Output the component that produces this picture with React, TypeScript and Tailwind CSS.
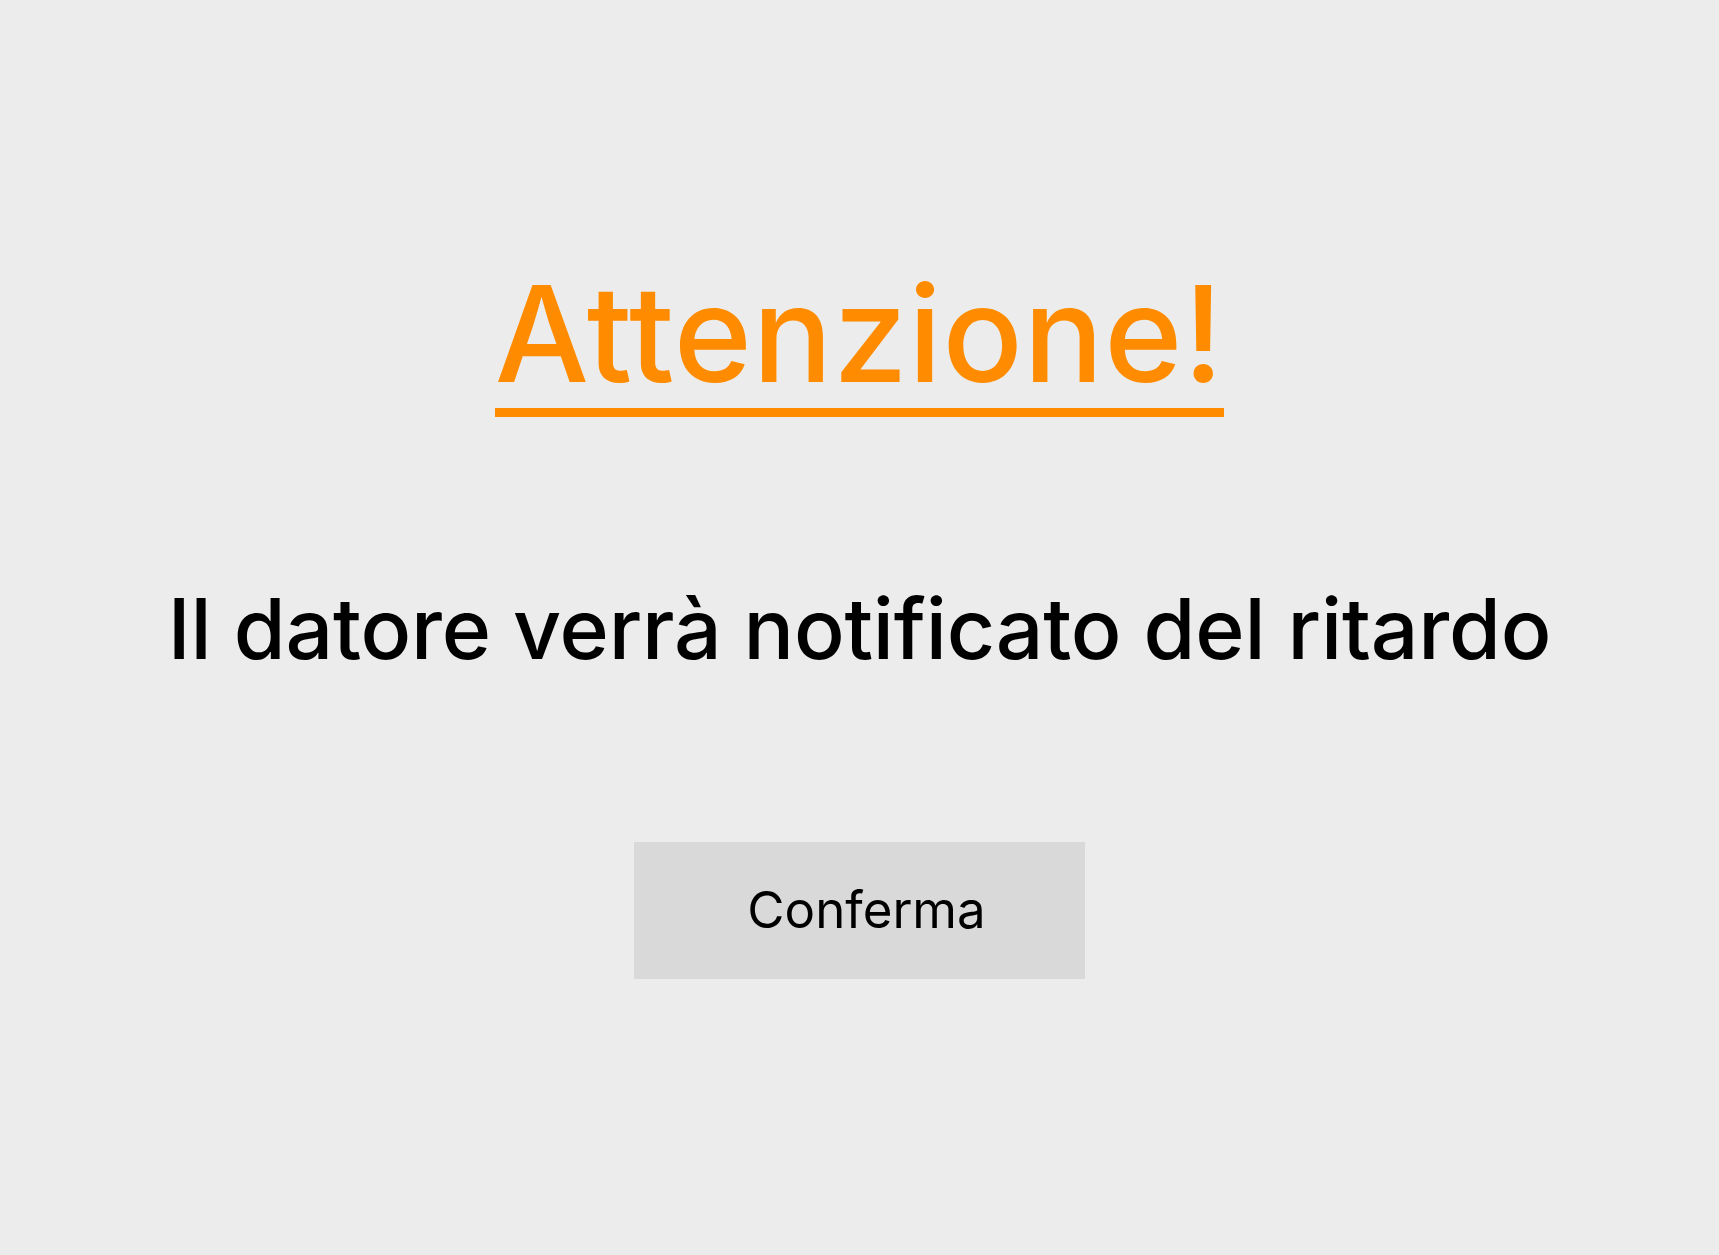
export default function App() {
  return (
    <div className="flex min-h-screen flex-col items-center bg-[#ececec] font-['Inter',sans-serif]">
      <h1 className="mt-[267px] inline-block border-b-[9px] border-[#ff8c00] pb-[8px] text-[133px] leading-none font-medium tracking-[0.7px] text-[#ff8c00]">
        Attenzione!
      </h1>
      <p className="mt-[170px] text-[84px] leading-none font-medium tracking-[-0.2px] text-black">Il datore verrà notificato del ritardo</p>
      <button type="button" className="mt-[171px] flex h-[137px] w-[451px] items-center justify-center bg-[#d9d9d9] pl-[14px] text-[51px] text-black">
        Conferma
      </button>
    </div>
  );
}
